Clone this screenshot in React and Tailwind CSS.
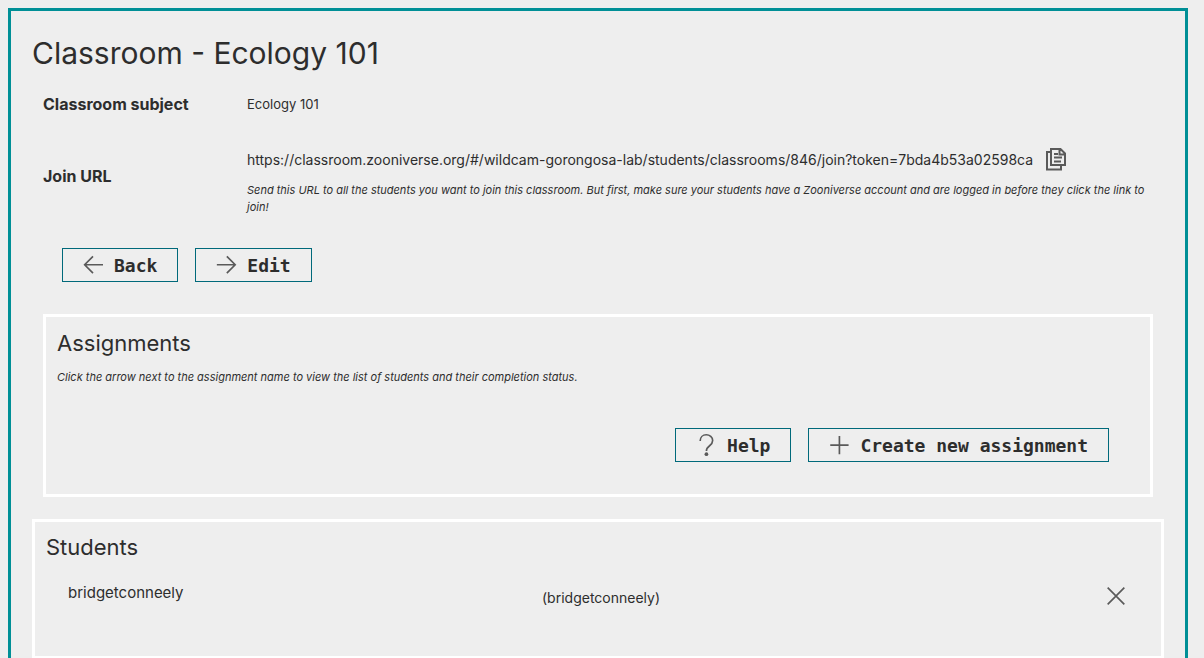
import React from 'react';

function Icon({ children, className = 'size-6' }) {
  return (
    <svg
      viewBox="0 0 24 24"
      fill="none"
      stroke="#5a5a5a"
      strokeWidth="2"
      aria-hidden="true"
      className={`${className} shrink-0 overflow-visible`}
    >
      {children}
    </svg>
  );
}

function ActionButton({ icon, children }) {
  return (
    <button
      type="button"
      className="flex h-[34px] cursor-pointer items-center gap-[11px] border border-[#00697a] px-5 pt-0.5 font-['DejaVu_Sans_Mono',monospace] text-lg leading-6 font-bold"
    >
      {icon}
      <span>{children}</span>
    </button>
  );
}

const backIcon = (
  <Icon className="size-5">
    <path d="M24 10.500H2M12 .5 2 10.500l10 10" />
  </Icon>
);
const forwardIcon = (
  <Icon className="size-5">
    <path d="M1 10.500h22M13 .5l10 10-10 10" />
  </Icon>
);
const helpIcon = (
  <Icon className="size-5">
    <path d="M5 6c0-4.500 3.200-7.500 7.300-7.500S20 1.500 20 5.500c0 3-1.500 4.500-3.700 6.200-2.600 2-3.800 3.300-3.800 6.300" />
    <circle cx="12.500" cy="21.800" r="2.200" fill="#5a5a5a" stroke="none" />
  </Icon>
);
const addIcon = (
  <Icon className="size-5">
    <path d="M12.500 0v22M1.500 11h22" />
  </Icon>
);

function Assignments() {
  return (
    <section className="mx-[11px] mt-8 border-[3px] border-white px-[11px] pt-3 pb-8">
      <h2 className="text-[22px] leading-7">Assignments</h2>
      <p className="mt-3 text-[11px] leading-4 italic">
        Click the arrow next to the assignment name to view the list of students and their completion status.
      </p>
      <div className="mt-[43px] mr-[30px] flex justify-end gap-[17px]">
        <ActionButton icon={helpIcon}>Help</ActionButton>
        <ActionButton icon={addIcon}>Create new assignment</ActionButton>
      </div>
    </section>
  );
}

const students = [{ name: 'bridgetconneely', login: 'bridgetconneely' }];

function Students() {
  return (
    <section className="mt-[22px] border-[3px] border-white px-[11px] pt-[11px] pb-[45px]">
      <h2 className="text-[22px] leading-7">Students</h2>
      <ul className="mt-5">
        {students.map((student) => (
          <li key={student.login} className="grid grid-cols-[474px_1fr_auto] items-center pr-6 pl-[22px]">
            <span className="pb-1.5 text-[15px] leading-6">{student.name}</span>
            <span className="pt-1 text-sm leading-5">({student.login})</span>
            <button type="button" aria-label="Remove student" className="cursor-pointer">
              <Icon className="size-5">
                <path d="m2 2 20 20M22 2 2 22" />
              </Icon>
            </button>
          </li>
        ))}
      </ul>
    </section>
  );
}

export default function App() {
  return (
    <div className="min-h-screen bg-[#eeeeee] pt-2 pr-4 pl-2 font-[Inter,sans-serif] text-[#2d2d2d]">
      <main className="border-[3px] border-b-0 border-[#008f96] px-[21px] pt-5">
        <h1 className="text-[30px] leading-11">Classroom - Ecology 101</h1>
        <table className="mt-[9px] w-full">
          <tbody>
            <tr>
              <th scope="row" className="w-[215px] py-2 pl-[11px] text-left align-middle text-base leading-6">
                Classroom subject
              </th>
              <td className="py-2 text-[13px] leading-5">Ecology 101</td>
            </tr>
            <tr>
              <th scope="row" className="pt-1 pl-[11px] text-left align-middle text-base leading-6">
                Join URL
              </th>
              <td className="pt-6 pr-2 pb-2">
                <div className="flex items-center gap-[11px]">
                  <span className="text-sm leading-5">
                    https://classroom.zooniverse.org/#/wildcam-gorongosa-lab/students/classrooms/846/join?token=7bda4b53a02598ca
                  </span>
                  <button type="button" aria-label="Copy join URL" className="cursor-pointer">
                    <Icon>
                      <path d="M7 1h9.500L21 5.500V17H7zM15.500 1v5.500H21M10 6h4M10 9.500h8M10 13.500h7M7 4H3v17.500h14V17" />
                    </Icon>
                  </button>
                </div>
                <p className="mt-[10px] text-[11px] leading-[17px] italic">
                  Send this URL to all the students you want to join this classroom. But first, make sure your students
                  have a Zooniverse account and are logged in before they click the link to join!
                </p>
              </td>
            </tr>
          </tbody>
        </table>
        <div className="mt-6 ml-[30px] flex gap-[17px]">
          <ActionButton icon={backIcon}>Back</ActionButton>
          <ActionButton icon={forwardIcon}>Edit</ActionButton>
        </div>
        <Assignments />
        <Students />
      </main>
    </div>
  );
}
